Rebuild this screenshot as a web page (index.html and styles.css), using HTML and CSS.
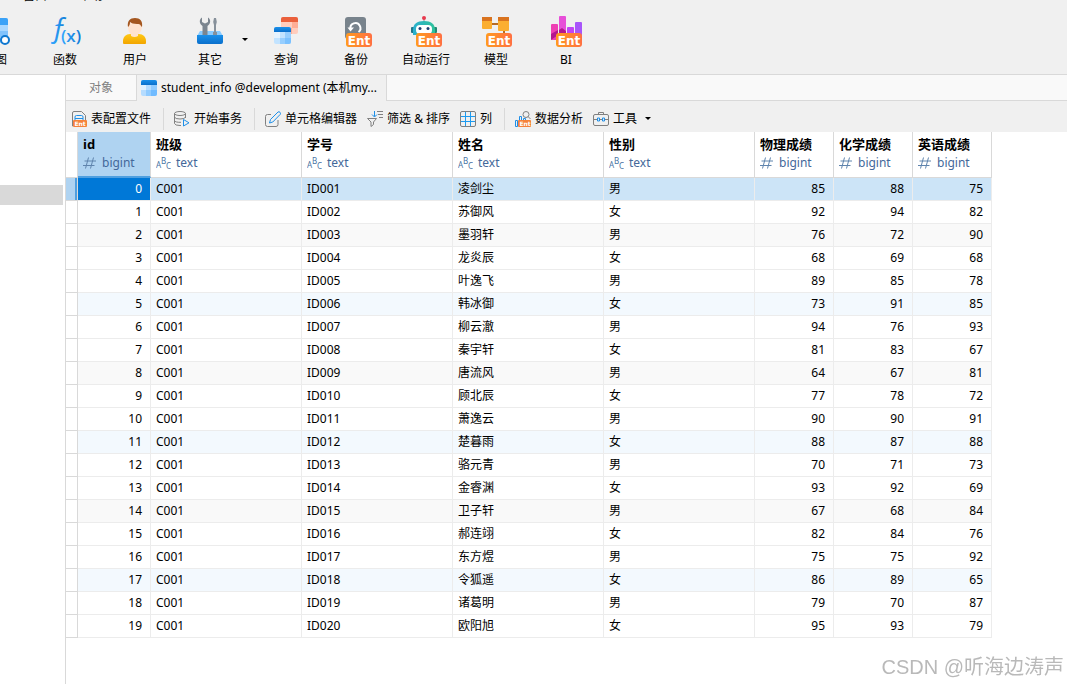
FILE: index.html
```html
<!DOCTYPE html>
<html lang="zh-CN">
<head>
    <meta charset="UTF-8">
    <title>student_info @development</title>
    <link rel="stylesheet" href="styles.css">
</head>
<body>
    <!-- Shared icons -->
    <svg class="defs" aria-hidden="true">
        <defs>
            <linearGradient id="g-ent" x1="0" x2="1"><stop offset="0" stop-color="#ff9a1f"/><stop offset="1" stop-color="#ff7043"/></linearGradient>
            <linearGradient id="g-blue" x1="0" y1="0" x2="0" y2="1"><stop offset="0" stop-color="#1a90ea"/><stop offset="1" stop-color="#0a6fcb"/></linearGradient>
            <linearGradient id="g-fx" x1="0" x2="1"><stop offset="0" stop-color="#35a7ff"/><stop offset="1" stop-color="#1179d4"/></linearGradient>
            <linearGradient id="g-gold" x1="0" y1="0" x2="0" y2="1"><stop offset="0" stop-color="#ffc915"/><stop offset="1" stop-color="#f2a500"/></linearGradient>
            <linearGradient id="g-bot" x1="0" x2="1"><stop offset="0" stop-color="#2bb0cf"/><stop offset="1" stop-color="#2fc29a"/></linearGradient>
            <symbol id="ent" viewBox="0 0 26 14">
                <rect width="26" height="14" rx="3" fill="url(#g-ent)"/>
                <text x="13" y="12" text-anchor="middle" class="ent-text">Ent</text>
            </symbol>
            <symbol id="num" viewBox="0 0 14 12">
                <path d="M5.5 0.5L2.5 11.5M10.5 0.5L7.5 11.5M1.5 4H13M0 8.5H11.5" fill="none" stroke="#5f84ad"/>
            </symbol>
            <symbol id="abc" viewBox="0 0 15 14">
                <text x="0" y="12" class="abc-text">A</text>
                <text x="5" y="8" class="abc-text">B</text>
                <text x="10" y="13" class="abc-text">C</text>
            </symbol>
        </defs>
    </svg>

    <header class="top">
        <nav class="menu">
            <a href="#">窗口</a>
            <a href="#">帮助</a>
        </nav>
        <div class="tools">
            <button class="tool">
                <svg width="32" height="32" viewBox="0 0 32 32">
                    <rect x="8" y="2" width="21" height="25" rx="2" fill="#a9d7ff"/>
                    <path d="M10 2H27a2 2 0 0 1 2 2V9H8V4a2 2 0 0 1 2-2z" fill="#3ba2f7"/>
                    <path d="M8 15H29V21H8z" fill="#82c3fc"/>
                    <circle cx="26" cy="24" r="4" fill="#fff" stroke="#0f78d0" stroke-width="2"/>
                </svg>
                <span>视图</span>
            </button>
            <button class="tool">
                <svg width="32" height="32" viewBox="0 0 32 32">
                    <text x="2" y="21" class="fx-f">ƒ</text>
                    <text x="22" y="26" text-anchor="middle" class="fx-x">(x)</text>
                </svg>
                <span>函数</span>
            </button>
            <button class="tool">
                <svg width="32" height="32" viewBox="0 0 32 32">
                    <path d="M4 27v-2c0-4 3-7 7-7h9c4 0 7 3 7 7v2q0 1-1 1H5q-1 0-1-1z" fill="url(#g-gold)"/>
                    <path d="M9 7h14v4c0 3-2 6-4 7.500v1.500q-3.500 2-7 0v-1.500C10 17 9 14 9 11z" fill="#ffe3cf"/>
                    <path d="M9 11C8 5 11 2 16 2s8 3 7 9l-1-1c-1-2-2-2-4-2-3 0-6-1-7-2 0 3-1 4-2 5z" fill="#a4561f"/>
                </svg>
                <span>用户</span>
            </button>
            <button class="tool tool-split">
                <svg width="32" height="32" viewBox="0 0 32 32">
                    <path d="M6 15H26L29 20H3z" fill="#8accff"/>
                    <path d="M8 1.500C5 3 5 8 8.500 10V20h5V10C17 8 17 3 14 1.500V6l-3 1.500L8 6z" fill="#7b858f"/>
                    <path d="M20 2h2l.8 4-.8 3v7h1v4h-4v-4h1V9l-.8-3z" fill="#87919b"/>
                    <path d="M3 19H29V26a2 2 0 0 1-2 2H5a2 2 0 0 1-2-2z" fill="url(#g-blue)"/>
                </svg>
                <span>其它</span>
            </button>
            <button class="more" aria-label="更多"><i class="caret"></i></button>
            <button class="tool">
                <svg width="32" height="32" viewBox="0 0 32 32">
                    <rect x="11" y="1" width="17" height="17" rx="2" fill="#ffcdbd"/>
                    <path d="M22 6H28V12H22zM17 12H22V18H17z" fill="#ffae96"/>
                    <path d="M13 1H26a2 2 0 0 1 2 2V6H11V3a2 2 0 0 1 2-2z" fill="#ea603c"/>
                    <rect x="4" y="11" width="17" height="17" rx="2" fill="#c2e3ff"/>
                    <path d="M4 16H10V22H4z" fill="#e5f3ff"/>
                    <path d="M15 16H21V22H15zM10 22H15V28H10z" fill="#96ceff"/>
                    <path d="M15 22H21V26a2 2 0 0 1-2 2H15z" fill="#7bc1ff"/>
                    <path d="M6 11H19a2 2 0 0 1 2 2V16H4V13a2 2 0 0 1 2-2z" fill="url(#g-blue)"/>
                </svg>
                <span>查询</span>
            </button>
            <button class="tool">
                <svg width="32" height="32" viewBox="0 0 32 32">
                    <rect x="5" y="1" width="21" height="22" rx="3" fill="#78838c"/>
                    <path d="M10.500 13a5 5 0 1 1 8 3" fill="none" stroke="#fff" stroke-width="2"/>
                    <path d="M7.500 11.500h6.500l-3.500 4z" fill="#fff"/>
                    <use href="#ent" x="6" y="17" width="26" height="14"/>
                </svg>
                <span>备份</span>
            </button>
            <button class="tool">
                <svg width="32" height="32" viewBox="0 0 32 32">
                    <path d="M14 2V7" stroke="#87919b" stroke-width="1"/>
                    <circle cx="14" cy="2" r="2" fill="#e8394d"/>
                    <rect x="1" y="11" width="4" height="6" rx="1" fill="#20778c"/>
                    <rect x="23" y="11" width="4" height="6" rx="1" fill="#238873"/>
                    <path d="M3 19V14C3 8 7 5 14 5s11 3 11 9v5z" fill="url(#g-bot)"/>
                    <rect x="6" y="9" width="16" height="9" rx="4" fill="#fff"/>
                    <circle cx="10" cy="12.500" r="1.500" fill="#1c3f72"/>
                    <circle cx="18" cy="12.500" r="1.500" fill="#1c3f72"/>
                    <use href="#ent" x="6" y="17" width="26" height="14"/>
                </svg>
                <span>自动运行</span>
            </button>
            <button class="tool">
                <svg width="32" height="32" viewBox="0 0 32 32">
                    <path d="M12 8H18M24 13V18" stroke="#b76b22" stroke-width="2"/>
                    <rect x="2" y="1" width="10" height="12" rx="1" fill="#fbae30"/>
                    <path d="M2 1H12V5H2z" fill="#d9731f"/>
                    <rect x="18" y="1" width="11" height="14" rx="1" fill="#fbae30"/>
                    <path d="M18 1H29V5H18z" fill="#d9731f"/>
                    <use href="#ent" x="6" y="17" width="26" height="14"/>
                </svg>
                <span>模型</span>
            </button>
            <button class="tool">
                <svg width="32" height="32" viewBox="0 0 32 32">
                    <rect x="1" y="8" width="7" height="16" rx="1" fill="#ee3fb3"/>
                    <rect x="9" y="0" width="7" height="20" rx="1" fill="#e74fd8"/>
                    <rect x="17" y="11" width="7" height="10" rx="1" fill="#c144f5"/>
                    <rect x="25" y="6" width="7" height="14" rx="1" fill="#a855fa"/>
                    <path d="M1 18L8 14V19L1 24zM9 14l3-2 4 3v4H9z" fill="#b3168f"/>
                    <use href="#ent" x="6" y="17" width="26" height="14"/>
                </svg>
                <span>BI</span>
            </button>
        </div>
    </header>

    <div class="main">
        <aside class="sidebar">
            <div class="side-selected"></div>
        </aside>

        <main class="content">
            <nav class="tabs">
                <a href="#" class="tab">对象</a>
                <a href="#" class="tab active">
                    <svg width="16" height="16" viewBox="0 0 16 16">
                        <rect width="16" height="16" rx="2" fill="#b5dcff"/>
                        <path d="M0 5H5V10H0z" fill="#e0f1ff"/>
                        <path d="M10 5H16V10H10zM5 10H10V16H5z" fill="#90cbff"/>
                        <path d="M10 10H16V14a2 2 0 0 1-2 2H10z" fill="#70bbff"/>
                        <path d="M2 0H14a2 2 0 0 1 2 2V5H0V2a2 2 0 0 1 2-2z" fill="url(#g-blue)"/>
                    </svg>
                    <span>student_info @development (本机my...</span>
                </a>
            </nav>

            <div class="toolbar">
                <button>
                    <svg width="16" height="16" viewBox="0 0 16 16">
                        <path d="M2 15H1.500V2Q1.500.5 3 .5H10.500L14.500 4.500V9" fill="none" stroke="#808080"/>
                        <path d="M4 9V6Q4 4.500 5.500 4.500H10.500Q12 4.500 12 6V9M4 7.500H12" fill="none" stroke="#1e8fe8"/>
                        <rect x="2" y="9" width="14" height="7" rx="1" fill="#f5823a"/>
                        <text x="9" y="15" text-anchor="middle" class="ent-small">Ent</text>
                    </svg>
                    <span>表配置文件</span>
                </button>
                <i class="sep"></i>
                <button>
                    <svg width="16" height="16" viewBox="0 0 16 16" fill="none" stroke="#808080">
                        <ellipse cx="6" cy="2.500" rx="5.500" ry="2"/>
                        <path d="M.5 2.500V12.500Q1 14.500 6 14.500H7M11.500 2.500V7M.5 6Q1 8 6 8T11.500 6M.5 9.500Q1 11.500 7 11.300"/>
                        <path d="M9.500 8.500V15L15 11.800z" stroke="#1e8fe8"/>
                    </svg>
                    <span>开始事务</span>
                </button>
                <i class="sep"></i>
                <button>
                    <svg width="16" height="16" viewBox="0 0 16 16" fill="none">
                        <path d="M6 3.500H2.500Q.5 3.500.5 5.500V13.500Q.5 15.500 2.500 15.500H11Q13 15.500 13 13.500V9" stroke="#808080"/>
                        <path d="M4.500 12L5.500 8.500L13 1Q14 .3 15 1.300T15.300 3.300L7.800 11z" stroke="#1e8fe8"/>
                    </svg>
                    <span>单元格编辑器</span>
                </button>
                <button>
                    <svg width="16" height="16" viewBox="0 0 16 16" fill="none">
                        <path d="M.5 7.500H9.500L6.500 11V13.500L4 15.500V11z" stroke="#808080"/>
                        <path d="M7.500 0V5.500M5 3.500L7.500 6L10 3.500" stroke="#1e8fe8"/>
                        <path d="M10 .5H16M11 3.500H16M12 6.500H16" stroke="#808080"/>
                    </svg>
                    <span>筛选 &amp; 排序</span>
                </button>
                <button>
                    <svg width="16" height="16" viewBox="0 0 16 16" fill="none">
                        <path d="M5.500 1V15M10.500 1V15M1 5.500H15M1 10.500H15" stroke="#1e9bf0"/>
                        <rect x=".5" y=".5" width="15" height="15" rx="1.500" stroke="#808080"/>
                    </svg>
                    <span>列</span>
                </button>
                <i class="sep"></i>
                <button>
                    <svg width="16" height="16" viewBox="0 0 16 16" fill="none">
                        <path d="M.5 15.500V9.500H2.500V15.500zM4.500 9V5.500H6.500V9M8.500 9V7.500H10.500V9" stroke="#1e8fe8"/>
                        <circle cx="11" cy="3.500" r="3" stroke="#808080"/>
                        <path d="M13 5.500L15.500 8" stroke="#808080"/>
                        <rect x="3" y="9" width="13" height="7" rx="1" fill="#f5823a"/>
                        <text x="10" y="15" text-anchor="middle" class="ent-small">Ent</text>
                    </svg>
                    <span>数据分析</span>
                </button>
                <button>
                    <svg width="16" height="16" viewBox="0 0 16 16" fill="none" stroke="#808080">
                        <path d="M5.500 3V1.500H10.500V3"/>
                        <rect x=".5" y="3.500" width="15" height="11" rx="1.500"/>
                        <path d="M1 8.500H4M7 8.500H9M12 8.500H15"/>
                        <path d="M4.500 7V10H6.500V7zM9.500 7V10H11.500V7z" stroke="#1e8fe8"/>
                    </svg>
                    <span>工具</span>
                    <i class="caret"></i>
                </button>
            </div>

            <div class="grid-wrap">
                <table class="grid">
                    <colgroup>
                        <col class="c-mark"><col class="c-id">
                        <col class="c-text"><col class="c-text"><col class="c-text"><col class="c-text">
                        <col class="c-num"><col class="c-num"><col class="c-num">
                    </colgroup>
                    <thead>
                        <tr>
                            <td class="mark"></td>
                            <th class="current">id<span class="type"><svg width="14" height="12"><use href="#num"/></svg>bigint</span></th>
                            <th>班级<span class="type"><svg width="15" height="14"><use href="#abc"/></svg>text</span></th>
                            <th>学号<span class="type"><svg width="15" height="14"><use href="#abc"/></svg>text</span></th>
                            <th>姓名<span class="type"><svg width="15" height="14"><use href="#abc"/></svg>text</span></th>
                            <th>性别<span class="type"><svg width="15" height="14"><use href="#abc"/></svg>text</span></th>
                            <th>物理成绩<span class="type"><svg width="14" height="12"><use href="#num"/></svg>bigint</span></th>
                            <th>化学成绩<span class="type"><svg width="14" height="12"><use href="#num"/></svg>bigint</span></th>
                            <th>英语成绩<span class="type"><svg width="14" height="12"><use href="#num"/></svg>bigint</span></th>
                        </tr>
                    </thead>
                    <tbody>
                        <tr class="selected"><td class="mark"></td><td class="n">0</td><td>C001</td><td>ID001</td><td>凌剑尘</td><td>男</td><td class="n">85</td><td class="n">88</td><td class="n">75</td></tr>
                        <tr><td class="mark"></td><td class="n">1</td><td>C001</td><td>ID002</td><td>苏御风</td><td>女</td><td class="n">92</td><td class="n">94</td><td class="n">82</td></tr>
                        <tr><td class="mark"></td><td class="n">2</td><td>C001</td><td>ID003</td><td>墨羽轩</td><td>男</td><td class="n">76</td><td class="n">72</td><td class="n">90</td></tr>
                        <tr><td class="mark"></td><td class="n">3</td><td>C001</td><td>ID004</td><td>龙炎辰</td><td>女</td><td class="n">68</td><td class="n">69</td><td class="n">68</td></tr>
                        <tr><td class="mark"></td><td class="n">4</td><td>C001</td><td>ID005</td><td>叶逸飞</td><td>男</td><td class="n">89</td><td class="n">85</td><td class="n">78</td></tr>
                        <tr><td class="mark"></td><td class="n">5</td><td>C001</td><td>ID006</td><td>韩冰御</td><td>女</td><td class="n">73</td><td class="n">91</td><td class="n">85</td></tr>
                        <tr><td class="mark"></td><td class="n">6</td><td>C001</td><td>ID007</td><td>柳云澈</td><td>男</td><td class="n">94</td><td class="n">76</td><td class="n">93</td></tr>
                        <tr><td class="mark"></td><td class="n">7</td><td>C001</td><td>ID008</td><td>秦宇轩</td><td>女</td><td class="n">81</td><td class="n">83</td><td class="n">67</td></tr>
                        <tr><td class="mark"></td><td class="n">8</td><td>C001</td><td>ID009</td><td>唐流风</td><td>男</td><td class="n">64</td><td class="n">67</td><td class="n">81</td></tr>
                        <tr><td class="mark"></td><td class="n">9</td><td>C001</td><td>ID010</td><td>顾北辰</td><td>女</td><td class="n">77</td><td class="n">78</td><td class="n">72</td></tr>
                        <tr><td class="mark"></td><td class="n">10</td><td>C001</td><td>ID011</td><td>萧逸云</td><td>男</td><td class="n">90</td><td class="n">90</td><td class="n">91</td></tr>
                        <tr><td class="mark"></td><td class="n">11</td><td>C001</td><td>ID012</td><td>楚暮雨</td><td>女</td><td class="n">88</td><td class="n">87</td><td class="n">88</td></tr>
                        <tr><td class="mark"></td><td class="n">12</td><td>C001</td><td>ID013</td><td>骆元青</td><td>男</td><td class="n">70</td><td class="n">71</td><td class="n">73</td></tr>
                        <tr><td class="mark"></td><td class="n">13</td><td>C001</td><td>ID014</td><td>金睿渊</td><td>女</td><td class="n">93</td><td class="n">92</td><td class="n">69</td></tr>
                        <tr><td class="mark"></td><td class="n">14</td><td>C001</td><td>ID015</td><td>卫子轩</td><td>男</td><td class="n">67</td><td class="n">68</td><td class="n">84</td></tr>
                        <tr><td class="mark"></td><td class="n">15</td><td>C001</td><td>ID016</td><td>郝连翊</td><td>女</td><td class="n">82</td><td class="n">84</td><td class="n">76</td></tr>
                        <tr><td class="mark"></td><td class="n">16</td><td>C001</td><td>ID017</td><td>东方煜</td><td>男</td><td class="n">75</td><td class="n">75</td><td class="n">92</td></tr>
                        <tr><td class="mark"></td><td class="n">17</td><td>C001</td><td>ID018</td><td>令狐遥</td><td>女</td><td class="n">86</td><td class="n">89</td><td class="n">65</td></tr>
                        <tr><td class="mark"></td><td class="n">18</td><td>C001</td><td>ID019</td><td>诸葛明</td><td>男</td><td class="n">79</td><td class="n">70</td><td class="n">87</td></tr>
                        <tr><td class="mark"></td><td class="n">19</td><td>C001</td><td>ID020</td><td>欧阳旭</td><td>女</td><td class="n">95</td><td class="n">93</td><td class="n">79</td></tr>
                    </tbody>
                </table>
            </div>
        </main>
    </div>

    <div class="watermark">CSDN @听海边涛声</div>
</body>
</html>
```
FILE: styles.css
```css
* {
    box-sizing: border-box;
}

body {
    margin: 0;
    min-height: 100vh;
    display: flex;
    flex-direction: column;
    overflow: hidden;
    background-color: #fff;
    color: #000;
    font: 12px/16px "Noto Sans", "Noto Sans CJK SC", sans-serif;
}

button {
    padding: 0;
    border: none;
    background: none;
    color: inherit;
    font: inherit;
}

a {
    color: inherit;
    text-decoration: none;
}

svg {
    flex: none;
}

.defs {
    position: absolute;
    width: 0;
    height: 0;
}

/* Text inside the icons */
.ent-text {
    font: bold 12px "DejaVu Sans", sans-serif;
    fill: #fff;
}

.ent-small {
    font: bold 6px "DejaVu Sans", sans-serif;
    fill: #fff;
}

.abc-text {
    font: 8px "Noto Sans", sans-serif;
    fill: #4a73a3;
}

.fx-f {
    font: italic 28px "Open Sans", sans-serif;
    fill: url(#g-fx);
}

.fx-x {
    font: 600 17px "Open Sans", sans-serif;
    fill: url(#g-fx);
}

/* Top menu and main tools */
.top {
    background-color: #f0f0f0;
    border-bottom: 1px solid #d9d9d9;
    overflow: hidden;
}

.menu {
    display: flex;
    align-items: flex-end;
    gap: 32px;
    height: 4px;
    padding-left: 23px;
}

.tools {
    display: flex;
    height: 70px;
    margin-left: -40px;
}

.tool {
    flex: none;
    display: flex;
    flex-direction: column;
    align-items: center;
    gap: 4px;
    width: 70px;
    padding-top: 12px;
}

.tool-split {
    width: 64px;
    margin-left: 8px;
}

.more {
    flex: none;
    display: flex;
    align-items: center;
    width: 9px;
}

.caret {
    border: 3px solid transparent;
    border-top-color: #000;
    border-bottom: none;
}

/* Sidebar and content */
.main {
    flex: 1;
    display: flex;
}

.sidebar {
    flex: none;
    width: 66px;
    padding: 110px 2px 0 0;
    border-right: 1px solid #d9d9d9;
}

.side-selected {
    height: 20px;
    background-color: #d9d9d9;
}

.content {
    flex: 1;
    min-width: 0;
}

.tabs {
    display: flex;
    height: 26px;
    background-color: #f9f9f9;
    box-shadow: inset 0 -1px #d9d9d9;
}

.tab {
    display: flex;
    align-items: center;
    justify-content: center;
    gap: 4px;
    width: 71px;
    border-right: 1px solid #d9d9d9;
    color: #808080;
}

.tab.active {
    width: 250px;
    padding: 0 4px;
    justify-content: flex-start;
    background-color: #f0f0f0;
    color: #000;
    white-space: nowrap;
}

.toolbar {
    display: flex;
    align-items: center;
    gap: 10px;
    height: 31px;
    padding: 4px 5px 0;
    background-color: #f0f0f0;
    white-space: nowrap;
}

.toolbar button {
    display: flex;
    align-items: center;
    gap: 4px;
}

.toolbar .caret {
    margin-left: 4px;
}

.sep {
    width: 1px;
    height: 22px;
    margin-left: 2px;
    background-color: #d9d9d9;
}

/* Data grid */
.grid-wrap {
    overflow: auto;
}

.grid {
    width: 926px;
    table-layout: fixed;
    border-collapse: separate;
    border-spacing: 0;
}

.c-mark {
    width: 12px;
}

.c-id {
    width: 73px;
}

.c-text {
    width: 151px;
}

.c-num {
    width: 79px;
}

.grid th {
    height: 46px;
    padding: 4px 5px;
    border-right: 1px solid #d9d9d9;
    border-bottom: 1px solid #d9d9d9;
    font-size: 13px;
    line-height: 17px;
    text-align: left;
    vertical-align: top;
    white-space: nowrap;
}

.grid th.current {
    background-color: #afd3f1;
    border-bottom: 2px solid #4e9fe0;
}

.type {
    display: flex;
    align-items: center;
    gap: 5px;
    height: 19px;
    color: #44689a;
    font-size: 12px;
    font-weight: normal;
}

.grid td {
    height: 23px;
    padding: 0 5px;
    border-right: 1px solid #ececec;
    border-bottom: 1px solid #ececec;
}

.grid td.n {
    padding-right: 8px;
    text-align: right;
}

.grid tbody tr:nth-child(6n+3) {
    background-color: #f9f9f9;
}

.grid tbody tr:nth-child(6n) {
    background-color: #f3f9fe;
}

.grid .mark {
    padding: 0;
    background-color: #fff;
    border-color: #d9d9d9;
}

.grid .selected {
    background-color: #cce4f7;
}

.grid .selected .mark {
    background-color: #afd3f1;
    box-shadow: inset -2px 0 #4e9fe0;
}

.grid .selected .mark + td {
    background-color: #0078d7;
    color: #fff;
}

.watermark {
    position: fixed;
    right: 3px;
    bottom: 3px;
    color: #b9b9b9;
    font-family: "Liberation Sans", "Noto Sans CJK SC", sans-serif;
    font-size: 20px;
    line-height: 28px;
}
```
